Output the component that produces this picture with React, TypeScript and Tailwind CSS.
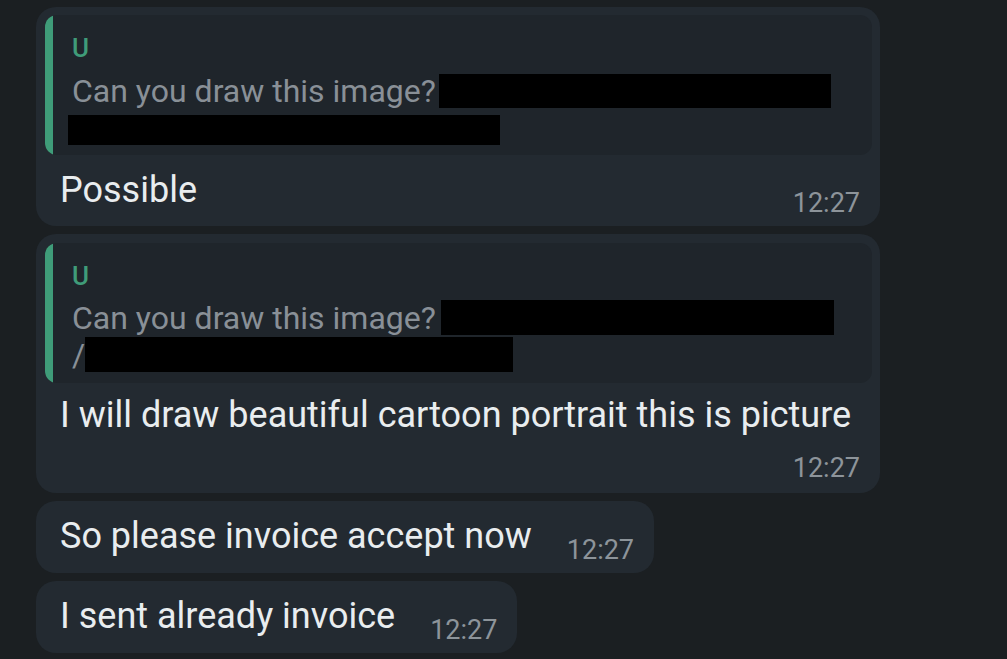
const font = { fontFamily: "Roboto, 'Noto Sans', sans-serif" };

type QuoteProps = {
  first: string;
  second: string;
  gap1: string;
  gap2: string;
  slash?: boolean;
};

function Quote({ first, second, gap1, gap2, slash }: QuoteProps) {
  return (
    <div className="flex h-[140px] overflow-hidden rounded-[12px] bg-[#1f252b]">
      <div className="w-[8px] shrink-0 rounded-l-[12px] bg-[#3f9c79]" />
      <div className="flex flex-col pl-[19px] pt-[19px]">
        <span className="h-[29px] text-[26px] font-medium leading-[29px] text-[#3f9c79]">U</span>
        <div className={`flex items-center ${gap1}`}>
          <span className="text-[32px] leading-[34px] text-[#899097]">Can you draw this image?</span>
          <span className={first} />
        </div>
        <div className={`flex items-center ${gap2}`}>
          {slash && <span className="text-[32px] leading-[34px] text-[#899097]">/</span>}
          <span className={second} />
        </div>
      </div>
    </div>
  );
}

function Time() {
  return <span className="block text-[27px] leading-[28px] text-[#8d949a]">12:27</span>;
}

export default function App() {
  return (
    <div className="h-[659px] w-[1007px] overflow-hidden bg-[#1b1f22] pl-[36px] pt-[7px]" style={font}>
      <div className="flex flex-col items-start gap-[8px]">
        <div className="w-[844px] rounded-[20px] bg-[#232a31] pb-[9px] pl-[9px] pr-[8px] pt-[8px]">
          <Quote
            gap1="mt-[11px]"
            gap2="mt-[7px]"
            first="ml-[3px] h-[34px] w-[392px] bg-black"
            second="-ml-[4px] h-[30px] w-[432px] bg-black"
          />
          <div className="flex items-start justify-between pl-[15px] pr-[12px]">
            <span className="mt-[13px] text-[36px] leading-[44px] text-[#e9edef]">Possible</span>
            <span className="mt-[34px]">
              <Time />
            </span>
          </div>
        </div>

        <div className="w-[844px] rounded-[20px] bg-[#232a31] pb-[11px] pl-[9px] pr-[8px] pt-[9px]">
          <Quote
            gap1="mt-[9px]"
            gap2="mt-[2px]"
            first="ml-[5px] h-[35px] w-[393px] bg-black"
            second="h-[35px] w-[428px] bg-black"
            slash
          />
          <div className="mt-[10px] pl-[15px]">
            <span className="text-[36px] leading-[44px] text-[#e9edef]">
              I will draw beautiful cartoon portrait this is picture
            </span>
          </div>
          <div className="mt-[17px] flex justify-end pr-[12px]">
            <Time />
          </div>
        </div>

        <div className="flex items-start gap-[35px] rounded-[20px] bg-[#232a31] pb-[9px] pl-[24px] pr-[20px] pt-[13px]">
          <span className="text-[36px] leading-[44px] text-[#e9edef]">So please invoice accept now</span>
          <span className="mt-[22px]">
            <Time />
          </span>
        </div>

        <div className="flex items-start gap-[35px] rounded-[20px] bg-[#232a31] pb-[9px] pl-[24px] pr-[20px] pt-[13px]">
          <span className="text-[36px] leading-[44px] text-[#e9edef]">I sent already invoice</span>
          <span className="mt-[22px]">
            <Time />
          </span>
        </div>
      </div>
    </div>
  );
}
